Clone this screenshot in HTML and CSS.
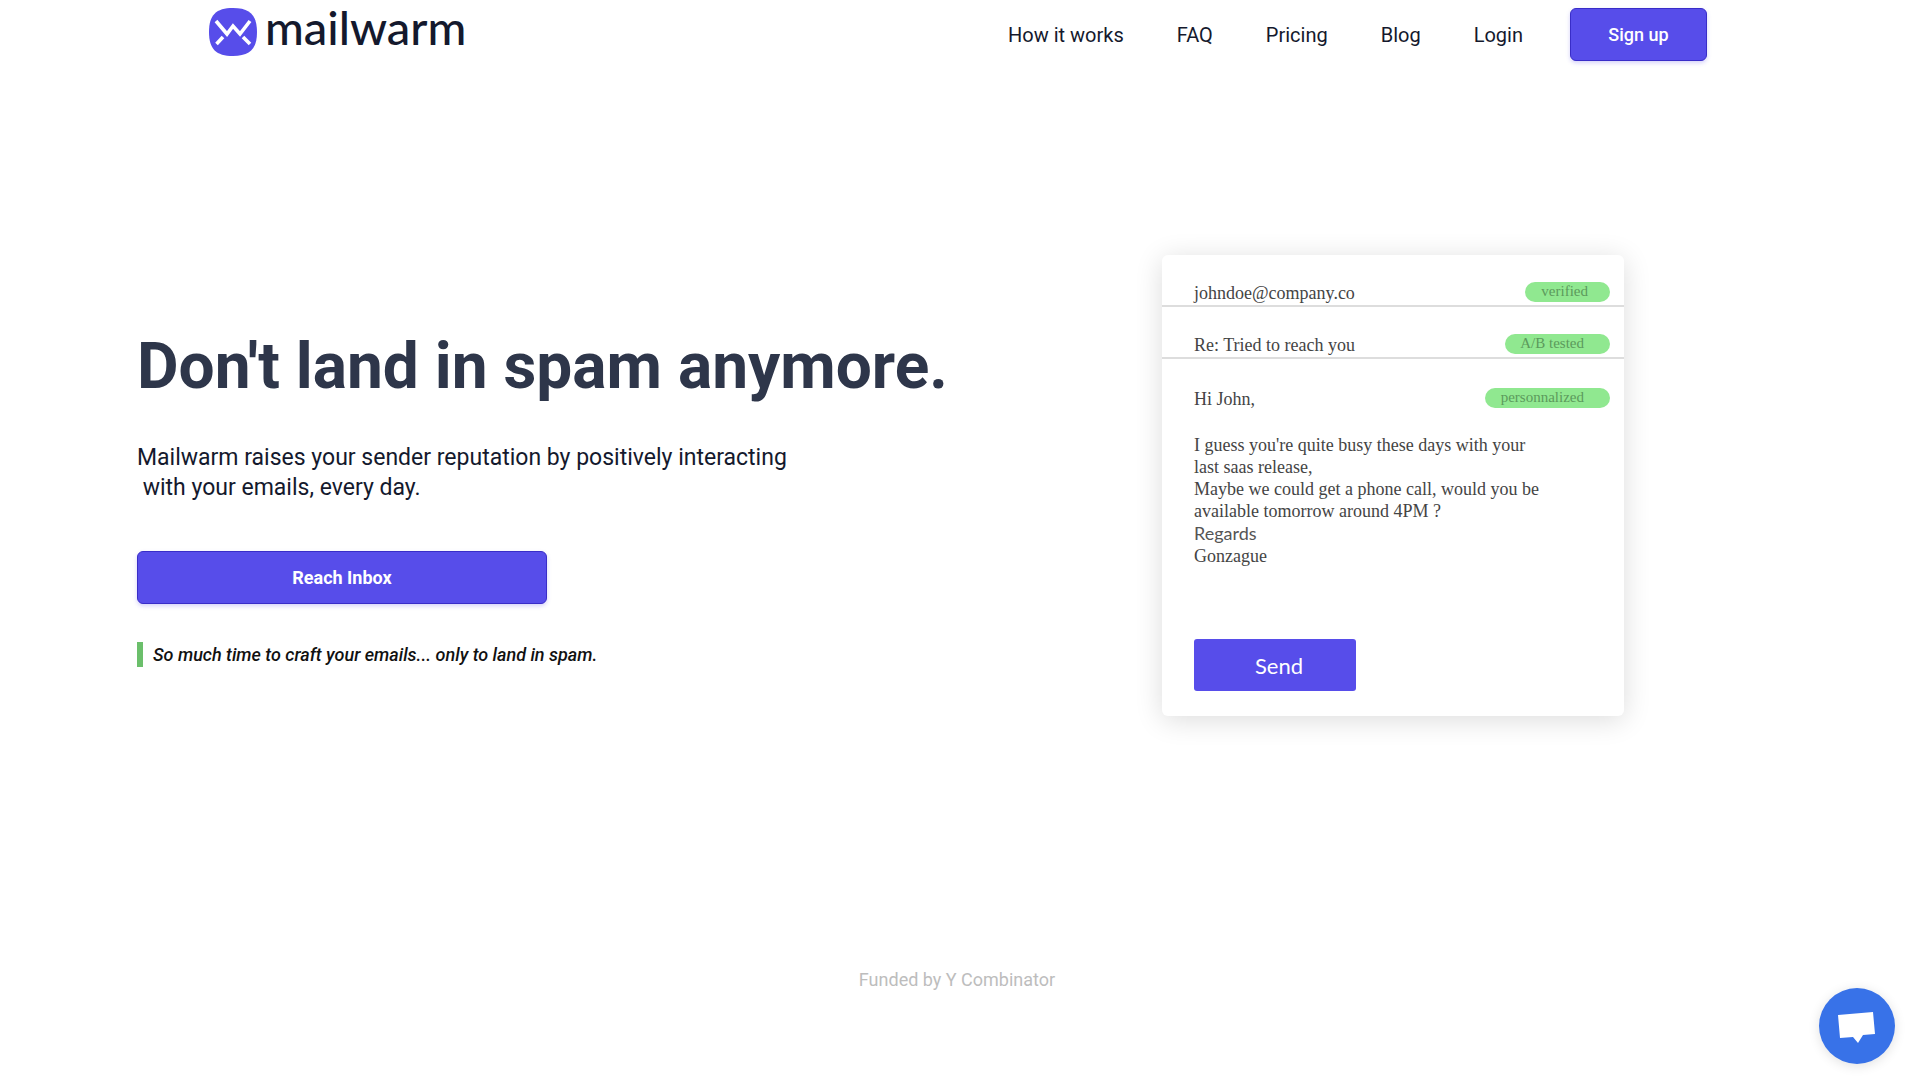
FILE: index.html
```html
<!DOCTYPE html>
<html lang="en">
  <head>
    <meta charset="UTF-8" />
    <meta name="viewport" content="width=device-width, initial-scale=1.0" />
    <title>Mailwarm</title>
    <link rel="stylesheet" href="styles.css">
  </head>
  <body>
    <header class="header">
      <a class="logo" href="#">
        <svg class="logo-mark" viewBox="0 0 48 48" aria-hidden="true">
          <path d="M24 0C41 0 48 7 48 24S41 48 24 48 0 41 0 24 7 0 24 0Z" fill="#574dea" />
          <path d="M7 13L18 26L24 18L31 26L41 13M7.500 36L14 29M41 36L34 29" fill="none" stroke="#fff" stroke-width="3.600" />
        </svg>
        <span class="logo-name">mailwarm</span>
      </a>
      <nav class="nav">
        <a href="#how">How it works</a>
        <a href="#faq">FAQ</a>
        <a href="#pricing">Pricing</a>
        <a href="#blog">Blog</a>
        <a href="#login">Login</a>
        <a class="button signup" href="#signup">Sign up</a>
      </nav>
    </header>

    <main class="hero">
      <section class="pitch">
        <h1>Don't land in spam anymore.</h1>
        <p class="lead">Mailwarm raises your sender reputation by positively interacting<br />&nbsp;with your emails, every day.</p>
        <button class="button reach" type="button">Reach Inbox</button>
        <p class="quote">So much time to craft your emails... only to land in spam.</p>
      </section>

      <section class="email">
        <div class="email-row">
          <span>johndoe@company.co</span>
          <span class="pill verified">verified</span>
        </div>
        <div class="email-row">
          <span>Re: Tried to reach you</span>
          <span class="pill tested">A/B tested</span>
        </div>
        <div class="email-row greeting">
          <span>Hi John,</span>
          <span class="pill personnalized">personnalized</span>
        </div>
        <p class="message">
          I guess you're quite busy these days with your<br />
          last saas release,<br />
          Maybe we could get a phone call, would you be<br />
          available tomorrow around 4PM ?<br />
          <span class="regards">Regards</span><br />
          Gonzague
        </p>
        <button class="send" type="button">Send</button>
      </section>
    </main>

    <footer class="footer">Funded by Y Combinator</footer>

    <button class="chat" type="button" aria-label="Open chat">
      <svg viewBox="0 0 76 76" aria-hidden="true">
        <path d="M19 27L54 24L56 46L44 47L39 55L34 49L21 50Z" fill="#fff" />
      </svg>
    </button>
  </body>
</html>
```

FILE: styles.css
```css
* {
  box-sizing: border-box;
}
body {
  margin: 0;
  padding-right: 6px;
  background-color: #fff;
  color: #14192d;
  font-family: Roboto, 'Liberation Sans', sans-serif;
}
a {
  color: inherit;
  text-decoration: none;
}
button {
  border: none;
  font-family: inherit;
  cursor: pointer;
}
.header {
  display: flex;
  align-items: flex-start;
  justify-content: space-between;
  max-width: 1500px;
  margin: 0 auto;
  padding: 8px 0 0 2px;
}
.logo {
  display: flex;
  align-items: flex-start;
  gap: 8px;
}
.logo-mark {
  width: 48px;
  height: 48px;
}
.logo-name {
  font-family: Lato, sans-serif;
  font-size: 47px;
  font-weight: 500;
  line-height: 38px;
}
.nav {
  display: flex;
  align-items: center;
  gap: 53px;
  font-size: 20px;
}
.button {
  height: 53px;
  border: 1px solid #392dc8;
  border-radius: 6px;
  background-color: #574dea;
  box-shadow: 0 2px 4px rgba(87, 77, 234, 0.25);
  color: #fff;
  font-size: 18px;
  font-weight: 500;
}
.signup {
  width: 137px;
  margin-left: -6px;
  line-height: 51px;
  text-align: center;
}
.hero {
  display: flex;
  align-items: center;
  justify-content: space-between;
  max-width: 1640px;
  margin: 0 auto;
  padding-top: 194px;
  padding-right: 153px;
}
.pitch {
  padding-top: 24px;
}
h1 {
  margin: 0 0 38px;
  color: #2e364a;
  font-size: 64px;
  line-height: 76px;
}
.lead {
  margin: 0 0 48px;
  font-size: 23px;
  line-height: 30px;
}
.reach {
  width: 410px;
  font-weight: 700;
}
.quote {
  margin: 38px 0 0;
  padding-left: 10px;
  border-left: 6px solid #6bbf6b;
  color: #111;
  font-size: 18px;
  font-style: italic;
  font-weight: 500;
  line-height: 25px;
}
.email {
  width: 462px;
  padding-bottom: 25px;
  border-radius: 6px;
  box-shadow: 0 4px 28px rgba(0, 0, 0, 0.14);
  color: #444;
  font-family: 'Liberation Serif', serif;
  font-size: 18px;
}
.email-row {
  display: flex;
  align-items: flex-end;
  justify-content: space-between;
  height: 52px;
  padding: 0 14px 1px 32px;
  border-bottom: 2px solid #ddd;
}
.greeting {
  border-bottom: none;
}
.pill {
  height: 20px;
  margin-bottom: 2px;
  border-radius: 10px;
  background-color: #90e890;
  color: #5c9a5c;
  font-size: 15px;
  line-height: 19px;
}
.verified {
  padding: 0 22px 0 16px;
}
.tested {
  padding: 0 26px 0 15px;
}
.personnalized {
  padding: 0 26px 0 16px;
}
.message {
  margin: 23px 32px 72px;
  line-height: 22px;
}
.regards {
  color: #555;
  font-family: Lato, sans-serif;
}
.send {
  width: 162px;
  height: 52px;
  margin-left: 32px;
  padding-left: 14px;
  border-radius: 3px;
  background-color: #574dea;
  color: #fff;
  font-family: Lato, sans-serif;
  font-size: 22px;
}
.footer {
  padding: 253px 0 80px;
  color: #bdbdbd;
  font-size: 18px;
  text-align: center;
}
.chat {
  position: fixed;
  right: 25px;
  bottom: 20px;
  width: 76px;
  height: 76px;
  padding: 0;
  border-radius: 50%;
  background-color: #3872e8;
  box-shadow: 0 2px 12px rgba(0, 0, 0, 0.12);
}
```
